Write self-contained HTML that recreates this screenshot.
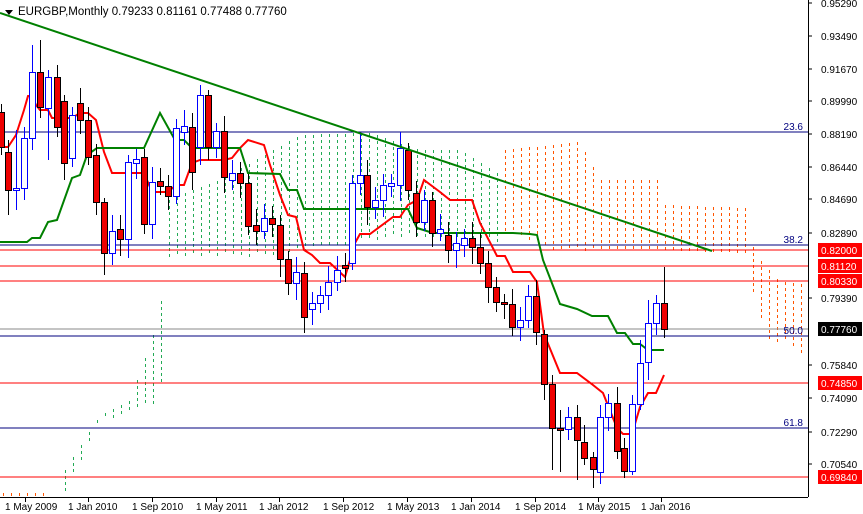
<!DOCTYPE html>
<html><head><meta charset="utf-8"><style>
html,body{margin:0;padding:0;background:#fff;}
svg{display:block;font-family:"Liberation Sans",sans-serif;}
</style></head><body>
<svg id="s" width="863" height="514" viewBox="0 0 863 514" xmlns="http://www.w3.org/2000/svg">
<rect width="863" height="514" fill="#fff"/>
<g id="cloud" shape-rendering="crispEdges"></g>
<g id="lines" shape-rendering="crispEdges">
<line x1="0" y1="132" x2="808" y2="132" stroke="#00007f" stroke-width="1"/>
<line x1="0" y1="245" x2="808" y2="245" stroke="#00007f"/>
<line x1="0" y1="336" x2="808" y2="336" stroke="#00007f"/>
<line x1="0" y1="428" x2="808" y2="428" stroke="#00007f"/>
<line x1="0" y1="250" x2="808" y2="250" stroke="#f00"/>
<line x1="0" y1="266" x2="808" y2="266" stroke="#f00"/>
<line x1="0" y1="281" x2="808" y2="281" stroke="#f00"/>
<line x1="0" y1="383" x2="808" y2="383" stroke="#f00"/>
<line x1="0" y1="477" x2="808" y2="477" stroke="#f00"/>
<line x1="0" y1="329" x2="808" y2="329" stroke="#888"/>
</g>
<g font-size="10" fill="#00007f">
<text x="803" y="130" text-anchor="end">23.6</text>
<text x="803" y="243" text-anchor="end">38.2</text>
<text x="803" y="334" text-anchor="end">50.0</text>
<text x="803" y="426" text-anchor="end">61.8</text>
</g>
<g id="ind"></g>
<g id="candles" shape-rendering="crispEdges"></g>
<line x1="0" y1="13" x2="712" y2="251" stroke="#008000" stroke-width="2"/>
<line x1="808.5" y1="0" x2="808.5" y2="497" stroke="#000"/>
<line x1="0" y1="497.5" x2="808" y2="497.5" stroke="#000"/>
<g id="axis" font-size="10"></g>
<g id="dates" font-size="10"></g>
<polygon points="5,10 13,10 9,15" fill="#000"/>
<text x="18" y="15" font-size="11.5" fill="#000">EURGBP,Monthly  0.79233 0.81161 0.77488 0.77760</text>
</svg>
<script>
var NS="http://www.w3.org/2000/svg";
function el(p,t,a){var e=document.createElementNS(NS,t);for(var k in a)e.setAttribute(k,a[k]);p.appendChild(e);return e;}
var C=document.getElementById('candles');
var d=[[1,112,147,1],[8,152,190,1],[16,188,190,0],[24,138,188,0],[32,72,138,0],[40,72,107,1],[48,77,108,0],[57,77,127,1],[64,101,163,1],[72,115,158,0],[80,103,120,1],[88,120,157,1],[96,155,202,1],[104,202,253,1],[112,231,253,0],[120,229,239,1],[128,162,239,0],[136,159,163,0],[144,157,224,1],[152,182,224,0],[160,181,186,1],[168,186,196,1],[176,128,196,0],[184,126,132,0],[192,127,172,1],[200,95,147,0],[208,95,147,1],[216,131,147,0],[224,131,177,1],[232,173,180,0],[240,173,183,1],[248,183,226,1],[256,225,231,1],[264,218,231,0],[272,218,224,1],[280,225,259,1],[288,259,283,1],[296,272,283,0],[304,273,317,1],[312,303,309,0],[320,295,303,0],[328,282,295,0],[337,270,282,0],[345,265,268,1],[352,183,263,0],[360,175,183,0],[367,175,207,1],[375,200,207,0],[383,185,200,0],[391,183,186,0],[400,148,185,0],[408,150,190,1],[416,193,222,1],[424,200,222,0],[432,200,233,1],[440,229,233,0],[448,235,250,1],[456,243,250,0],[464,238,245,0],[472,238,247,1],[480,247,263,1],[488,263,287,1],[496,287,302,1],[504,302,304,1],[512,304,327,1],[520,320,327,0],[528,296,320,0],[536,296,332,1],[544,334,384,1],[552,384,428,1],[560,428,430,1],[568,417,429,0],[577,417,440,1],[584,442,458,1],[593,457,469,1],[600,417,472,0],[608,403,417,0],[617,403,451,1],[624,448,471,1],[632,404,471,0],[640,363,404,0],[648,323,362,0],[656,303,323,0],[664,303,329,1]];
var hw={40:[40,118],32:[45,150],104:[198,275],304:[262,333],360:[133,195],408:[143,200],664:[267,338],593:[452,488],600:[405,484],560:[410,472],552:[375,470],48:[70,160],64:[95,180],16:[130,210],8:[140,215],128:[155,258],200:[85,165],208:[90,160],352:[175,270],536:[280,345],544:[330,400],584:[425,465],577:[405,480],624:[438,478],632:[395,475],640:[340,410],648:[300,380],656:[295,335],0:[100,160]};
d.forEach(function(c,i){var x=c[0],t=c[1],b=c[2],r=c[3];var h=hw[x]||[t-8-(i*7%9),b+8+(i*5%11)];
el(C,'rect',{x:x,y:h[0],width:1,height:h[1]-h[0],fill:r?'#000':'#00f'});
if(b-t<2)b=t+2;
el(C,'rect',{x:x-2.5,y:t+.5,width:6,height:b-t,fill:r?'#e00':'#fff',stroke:r?'#000':'#00f','stroke-width':1});});
var I=document.getElementById('ind');
function pl(pts,col){el(I,'polyline',{points:pts,fill:'none',stroke:col,'stroke-width':2});}
pl("0,147 8,147 16,135 24,110 28,96 32,96 36,105 40,110 48,110 52,118 72,118 80,113 88,113 96,120 104,152 112,173 144,173 152,192 168,192 176,185 184,185 192,163 200,160 224,160 232,158 240,148 248,140 264,145 270,165 280,195 288,215 296,217 304,250 312,255 320,263 330,263 345,277 355,243 360,234 370,234 393,217 400,217 408,205 417,200 424,180 440,192 450,200 472,200 480,223 497,256 505,256 513,272 530,272 537,282 544,334 560,373 577,373 593,385 603,393 617,428 623,434 632,434 640,407 648,393 656,393 664,375","#f00");
pl("0,242 27,242 32,238 40,238 48,222 57,220 72,178 80,175 87,155 97,148 144,148 160,113 175,140 184,140 192,148 240,148 248,173 280,174 288,190 297,190 304,209 408,209 417,228 433,233 513,233 530,234 537,235 543,260 560,304 577,309 592,316 608,316 617,333 625,333 633,344 640,344 648,350 664,350","#008000");
var G=document.getElementById('cloud');
function interp(a,x){for(var i=0;i<a.length-1;i++){if(x>=a[i][0]&&x<=a[i+1][0]){var f=(x-a[i][0])/(a[i+1][0]-a[i][0]);return a[i][1]+f*(a[i+1][1]-a[i][1]);}}return a[a.length-1][1];}
function dots(x,t,b,col){for(var y=Math.round(t);y<b;y+=6)el(G,'rect',{x:x,y:y,width:1,height:3,fill:col});}
var gt=[[65,470],[100,415],[130,400],[160,315],[168,200],[220,180],[300,135],[370,133],[420,150],[460,150],[500,175]];
var gb=[[65,490],[100,420],[160,400],[168,255],[260,255],[300,250],[400,235],[500,240]];
for(var x=65;x<=500;x+=8){var t=interp(gt,x),b=interp(gb,x);if(b>t)dots(x,t,b,'#22aa55');}
var ot=[[505,150],[580,142],[600,180],[660,180],[665,205],[745,208],[752,245],[760,260],[780,282],[815,285]];
var ob=[[505,230],[560,250],[690,248],[745,255],[752,292],[760,312],[768,338],[790,342],[800,355],[810,360],[815,385]];
for(var x=505;x<=807;x+=8){var t=interp(ot,x),b=interp(ob,x);dots(x,t,b,'#ff5500');}
for(var x=3;x<=50;x+=8)el(G,'rect',{x:x,y:493,width:1,height:3,fill:'#ff5500'});
var A=document.getElementById('axis');
[["0.95290",3],["0.93490",36],["0.91670",69],["0.89990",101],["0.88190",134],["0.86440",167],["0.84690",199],["0.82890",233],["0.79390",298],["0.75840",365],["0.74090",398],["0.72290",432],["0.70540",464]].forEach(function(l){
el(A,'line',{x1:808,y1:l[1],x2:812,y2:l[1],stroke:'#000'});var t=el(A,'text',{x:821,y:l[1]+4,fill:'#000'});t.textContent=l[0];});
[["0.82000",250,'#f00'],["0.81120",266,'#f00'],["0.80330",281,'#f00'],["0.77760",329,'#000'],["0.74850",383,'#f00'],["0.69840",477,'#f00']].forEach(function(l){
el(A,'rect',{x:818,y:l[1]-7,width:44,height:14,fill:l[2]});var t=el(A,'text',{x:821,y:l[1]+4,fill:'#fff'});t.textContent=l[0];});
var D=document.getElementById('dates');
[["1 May 2009",25],["1 Jan 2010",88],["1 Sep 2010",152],["1 May 2011",216],["1 Jan 2012",279],["1 Sep 2012",343],["1 May 2013",407],["1 Jan 2014",471],["1 Sep 2014",535],["1 May 2015",598],["1 Jan 2016",661]].forEach(function(l){
el(D,'line',{x1:l[1]+.5,y1:497,x2:l[1]+.5,y2:502,stroke:'#000'});var t=el(D,'text',{x:l[1]-20,y:510,fill:'#000'});t.textContent=l[0];});
</script>
</body></html>
